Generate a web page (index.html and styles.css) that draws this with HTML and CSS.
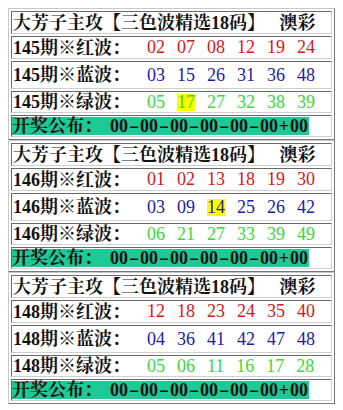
FILE: index.html
```html
<!DOCTYPE html>
<html lang="zh">
<head>
<meta charset="utf-8">
<link rel="stylesheet" href="styles.css">
</head>
<body>
<div class="group">
  <div class="cell title">大芳子主攻【三色波精选18码】 澳彩</div>
  <div class="cell row row-red"><span class="label">145期※红波：</span><span class="nums red"><span>02</span><span>07</span><span>08</span><span>12</span><span>19</span><span>24</span></span></div>
  <div class="cell row row-blue"><span class="label">145期※蓝波：</span><span class="nums blue"><span>03</span><span>15</span><span>26</span><span>31</span><span>36</span><span>48</span></span></div>
  <div class="cell row row-green"><span class="label">145期※绿波：</span><span class="nums green"><span>05</span><span class="hl">17</span><span>27</span><span>32</span><span>38</span><span>39</span></span></div>
  <div class="cell kj"><span class="kj-bar"><span class="kj-label">开奖公布：</span><span class="kj-nums">00<span class="sep">-</span>00<span class="sep">-</span>00<span class="sep">-</span>00<span class="sep">-</span>00<span class="sep">-</span>00<span class="plus">+</span>00</span></span></div>
</div>
<div class="group">
  <div class="cell title">大芳子主攻【三色波精选18码】 澳彩</div>
  <div class="cell row row-red"><span class="label">146期※红波：</span><span class="nums red"><span>01</span><span>02</span><span>13</span><span>18</span><span>19</span><span>30</span></span></div>
  <div class="cell row row-blue"><span class="label">146期※蓝波：</span><span class="nums blue"><span>03</span><span>09</span><span class="hl">14</span><span>25</span><span>26</span><span>42</span></span></div>
  <div class="cell row row-green"><span class="label">146期※绿波：</span><span class="nums green"><span>06</span><span>21</span><span>27</span><span>33</span><span>39</span><span>49</span></span></div>
  <div class="cell kj"><span class="kj-bar"><span class="kj-label">开奖公布：</span><span class="kj-nums">00<span class="sep">-</span>00<span class="sep">-</span>00<span class="sep">-</span>00<span class="sep">-</span>00<span class="sep">-</span>00<span class="plus">+</span>00</span></span></div>
</div>
<div class="group">
  <div class="cell title">大芳子主攻【三色波精选18码】 澳彩</div>
  <div class="cell row row-red"><span class="label">148期※红波：</span><span class="nums red"><span>12</span><span>18</span><span>23</span><span>24</span><span>35</span><span>40</span></span></div>
  <div class="cell row row-blue"><span class="label">148期※蓝波：</span><span class="nums blue"><span>04</span><span>36</span><span>41</span><span>42</span><span>47</span><span>48</span></span></div>
  <div class="cell row row-green"><span class="label">148期※绿波：</span><span class="nums green"><span>05</span><span>06</span><span>11</span><span>16</span><span>17</span><span>28</span></span></div>
  <div class="cell kj"><span class="kj-bar"><span class="kj-label">开奖公布：</span><span class="kj-nums">00<span class="sep">-</span>00<span class="sep">-</span>00<span class="sep">-</span>00<span class="sep">-</span>00<span class="sep">-</span>00<span class="plus">+</span>00</span></span></div>
</div>
</body>
</html>
```
FILE: styles.css
```css
html { background: #fff; }
body {
  margin: 8px;
  font-family: "Liberation Serif", "Noto Serif CJK SC", "Noto Sans CJK SC", serif;
  font-size: 18px;
  line-height: 20px;
  color: #111;
}
.group {
  border: 1px solid;
  border-color: #c8c8c8 #7a7a7a #7a7a7a #c8c8c8;
  padding: 2px;
  display: flex;
  flex-direction: column;
  gap: 2px;
}
.cell {
  box-sizing: border-box;
  border: 1px solid;
  border-color: #6a6a6a #cfcfcf #cfcfcf #6a6a6a;
  display: flex;
  align-items: center;
  padding: 0 1px;
  white-space: nowrap;
  overflow: hidden;
}
.title {
  height: 23px;
  font-weight: bold;
  word-spacing: 10px;
}
.row-red { height: 23px; }
.row-blue { height: 28px; }
.row-green { height: 22px; }
.label {
  font-weight: bold;
  width: 134px;
  flex: none;
}
.nums {
  display: flex;
  gap: 12px;
}
.nums span {
  display: inline-block;
  line-height: 17px;
}
.red { color: #d8161c; }
.blue { color: #1b1ba8; }
.green { color: #3ad83a; }
.hl { background: #ffff00; }
.kj {
  height: 22px;
  padding: 1px 0;
  align-items: stretch;
}
.kj-bar {
  background: #1dc994;
  display: flex;
  align-items: center;
  font-weight: bold;
  padding-right: 1px;
}
.kj-nums {
  margin-left: 8px;
  display: flex;
  align-items: center;
}
.sep, .plus {
  display: inline-block;
  width: 12px;
  text-align: center;
}
.sep { transform: scaleX(1.7); }
```
